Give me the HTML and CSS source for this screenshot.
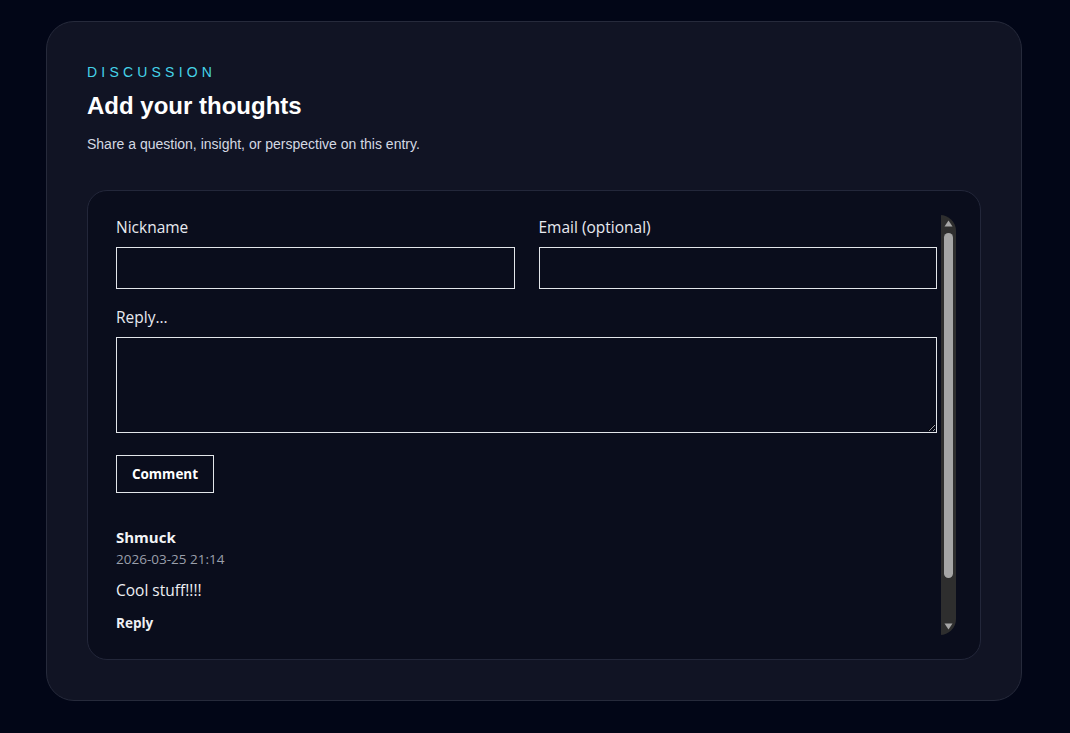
FILE: index.html
```html
<!DOCTYPE html>
<html lang="en">
<head>
<meta charset="utf-8">
<title>Discussion</title>
<link rel="stylesheet" href="styles.css">
</head>
<body>
  <section class="discussion">
    <header class="discussion-head">
      <p class="eyebrow">DISCUSSION</p>
      <h2 class="title">Add your thoughts</h2>
      <p class="subtitle">Share a question, insight, or perspective on this entry.</p>
    </header>
    <div class="panel">
      <div class="panel-view">
        <div class="panel-content">
          <form class="comment-form">
            <div class="row">
              <label class="field">
                <span class="field-label">Nickname</span>
                <input class="input" type="text">
              </label>
              <label class="field">
                <span class="field-label">Email (optional)</span>
                <input class="input" type="email">
              </label>
            </div>
            <label class="field">
              <span class="field-label">Reply...</span>
              <textarea class="textarea"></textarea>
            </label>
            <div class="actions">
              <button class="btn" type="button">Comment</button>
            </div>
          </form>
          <ul class="comments">
            <li class="comment">
              <div class="comment-author">Shmuck</div>
              <div class="comment-date">2026-03-25 21:14</div>
              <p class="comment-body">Cool stuff!!!!</p>
              <button class="reply-link" type="button">Reply</button>
            </li>
          </ul>
        </div>
        <div class="scrollbar" aria-hidden="true">
          <div class="sb-btn">
            <svg width="15" height="15" viewBox="0 0 15 15"><polygon points="3.5,11.5 7.5,5.5 11.5,11.5" fill="#a6a6a6"/></svg>
          </div>
          <div class="sb-track">
            <div class="sb-thumb"></div>
          </div>
          <div class="sb-btn">
            <svg width="15" height="15" viewBox="0 0 15 15"><polygon points="3.5,3.5 11.5,3.5 7.5,9.5" fill="#a6a6a6"/></svg>
          </div>
        </div>
      </div>
    </div>
  </section>
</body>
</html>
```

FILE: styles.css
```css
html {
  color-scheme: dark;
}

body {
  margin: 0;
  background: #020617;
  padding: 21px 0 0 46px;
}

.discussion {
  box-sizing: border-box;
  width: 976px;
  height: 680px;
  padding: 40px;
  background: #111424;
  border: 1px solid #262a3b;
  border-radius: 28px;
}

.discussion-head {
  font-family: "Liberation Sans", Arial, sans-serif;
  margin-bottom: 36px;
}

.eyebrow {
  margin: 0;
  font-size: 14px;
  line-height: 20px;
  letter-spacing: 0.3em;
  color: #45d3e8;
}

.title {
  margin: 9px 0 0;
  font-size: 24px;
  line-height: 30px;
  font-weight: 700;
  color: #ffffff;
}

.subtitle {
  margin: 13px 0 0;
  font-size: 14px;
  line-height: 20px;
  color: #d4d9e3;
}

.panel {
  box-sizing: border-box;
  height: 470px;
  padding: 24px;
  background: #0a0d1c;
  border: 1px solid #23273a;
  border-radius: 20px;
}

.panel-view {
  display: flex;
  height: 420px;
  border-radius: 16px;
  overflow: hidden;
}

.panel-content {
  flex: 1;
  min-width: 0;
  padding: 0 4px;
  overflow: hidden;
  font-family: "Open Sans", "Noto Sans", sans-serif;
  color: #e8eaf0;
}

.scrollbar {
  flex: 0 0 15px;
  display: flex;
  flex-direction: column;
  background: #2e2e2e;
}

.sb-btn {
  flex: 0 0 15px;
  height: 15px;
}

.sb-btn svg {
  display: block;
}

.sb-track {
  flex: 1;
  padding: 3px;
}

.sb-thumb {
  height: 345px;
  border-radius: 5px;
  background: #a6a6a6;
}

.comment-form {
  display: flex;
  flex-direction: column;
  gap: 16px;
}

.row {
  display: grid;
  grid-template-columns: 1fr 1fr;
  gap: 24px;
}

.field {
  display: flex;
  flex-direction: column;
  gap: 8px;
}

.field-label {
  font-size: 15.5px;
  line-height: 24px;
  color: #e8eaf0;
}

.input,
.textarea {
  box-sizing: border-box;
  display: block;
  width: 100%;
  margin: 0;
  background: transparent;
  border: 1px solid #e3e5ea;
  border-radius: 0;
  color: #ffffff;
  font: inherit;
  padding: 8px 10px;
}

.input {
  height: 42px;
}

.textarea {
  height: 96px;
  resize: vertical;
}

.actions {
  padding-top: 6px;
}

.btn {
  box-sizing: border-box;
  width: 98px;
  height: 38px;
  padding: 0;
  background: transparent;
  border: 1px solid #e3e5ea;
  border-radius: 0;
  color: #ffffff;
  font-family: "Open Sans", "Noto Sans", sans-serif;
  font-size: 13.5px;
  font-weight: 700;
  cursor: pointer;
}

.comments {
  list-style: none;
  margin: 33px 0 0;
  padding: 0;
}

.comment-author {
  font-size: 15px;
  line-height: 22px;
  font-weight: 700;
  color: #f3f4f7;
}

.comment-date {
  margin-top: 1px;
  font-size: 13.5px;
  line-height: 20px;
  color: #9a9fab;
}

.comment-body {
  margin: 9px 0 0;
  font-size: 15.5px;
  line-height: 24px;
  color: #eef0f4;
}

.reply-link {
  display: block;
  margin-top: 11px;
  padding: 0;
  background: none;
  border: none;
  color: #eef0f4;
  font-family: "Open Sans", "Noto Sans", sans-serif;
  font-size: 13.5px;
  line-height: 20px;
  font-weight: 700;
  cursor: pointer;
}
```
